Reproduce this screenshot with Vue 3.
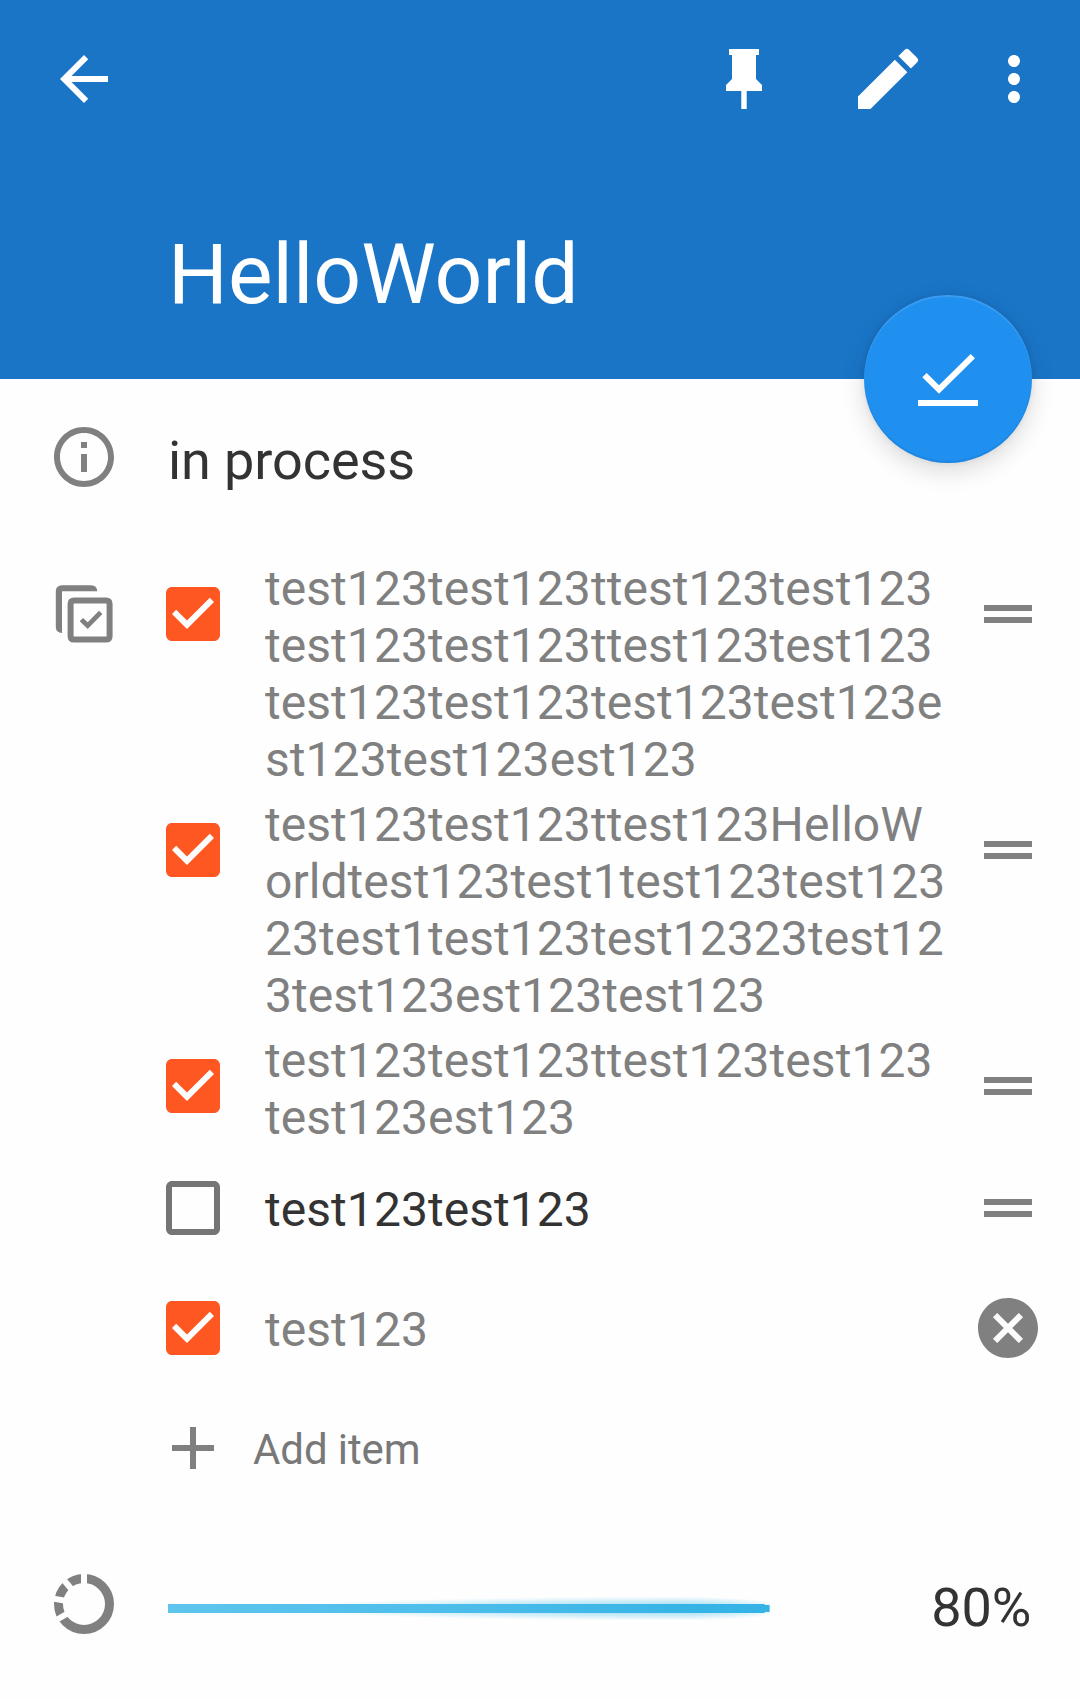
<script setup>
const CHECKED = 'M19 3H5c-1.11 0-2 .9-2 2v14c0 1.1.89 2 2 2h14c1.11 0 2-.9 2-2V5c0-1.1-.89-2-2-2zm-9 14l-5-5 1.41-1.41L10 14.17l7.59-7.59L19 8l-9 9z'
const UNCHECKED = 'M19 5v14H5V5h14m0-2H5c-1.1 0-2 .9-2 2v14c0 1.1.9 2 2 2h14c1.1 0 2-.9 2-2V5c0-1.1-.9-2-2-2z'
const HANDLE = 'M20 9H4v2h16V9zM4 15h16v-2H4v2z'
const CLEAR = 'M12 2C6.47 2 2 6.47 2 12s4.47 10 10 10 10-4.47 10-10S17.53 2 12 2zm5 13.59L15.59 17 12 13.41 8.41 17 7 15.59 10.59 12 7 8.41 8.41 7 12 10.59 15.59 7 17 8.41 13.41 12 17 15.59z'

const items = [
  { done: true, text: 'test123test123ttest123test123\ntest123test123ttest123test123\ntest123test123test123test123e\nst123test123est123' },
  { done: true, text: 'test123test123ttest123HelloW\norldtest123test1test123test123\n23test1test123test12323test12\n3test123est123test123' },
  { done: true, text: 'test123test123ttest123test123\ntest123est123' },
  { done: false, text: 'test123test123' },
  { done: true, text: 'test123', editing: true },
]
const percent = 80
</script>

<template>
  <div class="screen">
    <header class="header">
      <div class="toolbar">
        <svg class="icon" viewBox="0 0 24 24"><path d="M20 11H7.83l5.59-5.59L12 4l-8 8 8 8 1.41-1.41L7.83 13H20v-2z" /></svg>
        <div class="actions">
          <svg class="icon" viewBox="0 0 24 24"><path d="M16 12V4h1V2H7v2h1v8l-2 2v2h5.1v6h1.8v-6H18v-2l-2-2z" /></svg>
          <svg class="pencil" viewBox="0 0 24 24"><path d="M3 17.25V21h3.75L17.81 9.94l-3.75-3.75L3 17.25zM20.71 7.04a.996.996 0 0 0 0-1.41l-2.34-2.34a.996.996 0 0 0-1.41 0l-1.83 1.83 3.75 3.75 1.83-1.83z" /></svg>
          <svg class="icon" viewBox="0 0 24 24"><path d="M12 8c1.1 0 2-.9 2-2s-.9-2-2-2-2 .9-2 2 .9 2 2 2zm0 2c-1.1 0-2 .9-2 2s.9 2 2 2 2-.9 2-2-.9-2-2-2zm0 6c-1.1 0-2 .9-2 2s.9 2 2 2 2-.9 2-2-.9-2-2-2z" /></svg>
        </div>
      </div>
      <h1 class="title">HelloWorld</h1>
      <button class="fab">
        <svg viewBox="0 0 168 168"><path d="M58.3 82.3l4.4-4.3L75 90.3 106.7 59l4.3 4.3L75 98.7zM54 105h60v6H54z" /></svg>
      </button>
    </header>

    <section class="status">
      <svg class="icon" viewBox="0 0 24 24"><path d="M11 17h2v-6h-2v6zm1-15C6.48 2 2 6.48 2 12s4.48 10 10 10 10-4.48 10-10S17.52 2 12 2zm0 18c-4.41 0-8-3.59-8-8s3.59-8 8-8 8 3.59 8 8-3.59 8-8 8zM11 9h2V7h-2v2z" /></svg>
      <span>in process</span>
    </section>

    <section class="checklist">
      <svg class="icon list-icon" viewBox="0 0 72 72">
        <path d="M49.3 13.2H14V55q-6-.3-6.2-6V13.4q0-6 6.2-6.2H43q6 .2 6.3 6z" />
        <path class="line" d="M26 22.6H58q3.6 0 3.6 3.6V58q0 3.6-3.6 3.6H26q-3.4 0-3.4-3.6V26.2q0-3.6 3.4-3.6z" />
        <path d="M31.7 43.3L35 40l4.7 4.3L51 32.7l3.4 3.3L39.7 51z" />
      </svg>
      <div class="rows">
        <div v-for="(item, i) in items" :key="i" class="row">
          <svg class="icon box" :class="{ on: item.done }" viewBox="0 0 24 24"><path :d="item.done ? CHECKED : UNCHECKED" /></svg>
          <div class="text" :class="{ done: item.done }">{{ item.text }}</div>
          <svg class="icon end" viewBox="0 0 24 24"><path :d="item.editing ? CLEAR : HANDLE" /></svg>
        </div>
        <div class="row">
          <svg class="icon box add" viewBox="0 0 24 24"><path d="M19 13h-6v6h-2v-6H5v-2h6V5h2v6h6v2z" /></svg>
          <div class="add-label">Add item</div>
        </div>
      </div>
    </section>

    <section class="progress">
      <svg class="icon" viewBox="0 0 72 72">
        <circle class="ring" cx="36" cy="36" r="25.5" />
        <path class="gap" d="M36 36V2" />
        <path class="gap" d="M36 36V2" transform="rotate(-40 36 36)" />
        <path class="gap" d="M36 36V2" transform="rotate(-80 36 36)" />
        <path class="gap" d="M36 36V2" transform="rotate(-120 36 36)" />
      </svg>
      <div class="track">
        <div class="bar" :style="{ width: percent + '%' }"><div class="fill"></div></div>
      </div>
      <span class="percent">{{ percent }}%</span>
    </section>
  </div>
</template>

<style>
body { margin: 0; background: #fefefe; }
</style>

<style scoped>
.screen {
  box-sizing: border-box;
  width: 1080px;
  height: 1699px;
  overflow: hidden;
  background: #fefefe;
  color: #333;
  font-family: Roboto, "Noto Sans", sans-serif;
}
svg { display: block; flex: none; fill: #808080; }
.icon { width: 72px; height: 72px; }
.header {
  position: relative;
  box-sizing: border-box;
  height: 379px;
  padding: 39px 30px 0 48px;
  background: #1a75c7;
}
.header svg { fill: #fff; }
.toolbar { display: flex; justify-content: space-between; align-items: center; height: 80px; }
.actions { display: flex; align-items: center; }
.pencil { width: 80px; height: 80px; margin: 0 50px 0 68px; }
.title {
  margin: 107px 0 0 120px;
  font-size: 84px;
  line-height: 98px;
  font-weight: 400;
  color: #fff;
}
.fab {
  position: absolute;
  right: 48px;
  bottom: -84px;
  width: 168px;
  height: 168px;
  padding: 0;
  border: 0;
  border-radius: 50%;
  background: #1f8ff0;
  box-shadow: 0 8px 24px rgba(0, 0, 0, .14), 0 0 6px rgba(0, 0, 0, .07), inset 0 2px 1px rgba(255, 255, 255, .13), inset 0 -2px 1px rgba(0, 0, 0, .07);
}
.status {
  display: flex;
  align-items: center;
  height: 72px;
  margin-top: 42px;
  padding-left: 48px;
  gap: 48px;
  font-size: 54px;
  line-height: 64px;
  letter-spacing: -.08px;
}
.status span { padding-top: 8px; }
.checklist { display: flex; margin-top: 61px; padding-left: 48px; }
.list-icon { margin-top: 24px; }
.line { fill: none; stroke: #808080; stroke-width: 6; }
.rows { flex: 1; padding-left: 37px; }
.row { display: flex; min-height: 120px; align-items: flex-start; }
.box { margin-top: 24px; fill: #757575; }
.box.on { fill: #ff5722; }
.box.add { fill: #808080; }
.text {
  flex: 1;
  align-self: center;
  margin-left: 36px;
  padding: 5px 0 3px;
  font-size: 48px;
  line-height: 57px;
  letter-spacing: .055px;
  white-space: pre;
}
.row:nth-child(-n+3) .text { padding: 6px 0 2px; }
.done { color: #808080; }
.end { margin: 24px 36px 0 0; }
.add-label {
  align-self: center;
  margin-left: 24px;
  padding-top: 3px;
  font-size: 42px;
  line-height: 49px;
  letter-spacing: -.1px;
  color: #787878;
}
.progress {
  display: flex;
  align-items: center;
  height: 72px;
  margin-top: 60px;
  padding: 0 48px;
}
.ring { fill: none; stroke: #808080; stroke-width: 9; }
.gap { stroke: #fefefe; stroke-width: 6; }
.track { width: 752px; margin: 9px 0 0 48px; }
.bar { position: relative; height: 9px; }
.bar::before,
.bar::after {
  content: "";
  position: absolute;
  top: -8px;
  height: 25px;
}
/* soft glow that swells towards the leading end of the bar */
.bar::before {
  right: 92px;
  width: 400px;
  background: radial-gradient(400px 12px at 100% 50%, rgba(51, 181, 229, .55), rgba(51, 181, 229, .25) 60%, rgba(51, 181, 229, 0));
}
.bar::after {
  right: 0;
  width: 92px;
  background: radial-gradient(115px 12px at 0 50%, rgba(51, 181, 229, .55), rgba(51, 181, 229, .25) 60%, rgba(51, 181, 229, 0));
}
.fill {
  position: relative;
  z-index: 1;
  height: 9px;
  background: linear-gradient(90deg, #5ec5ed, #4cbdea 50%, #36b4e6 85%, #36b3e6);
  clip-path: polygon(0 0, calc(100% - 5px) 0, calc(100% - 5px) 1px, 100% 1px, 100% 8px, calc(100% - 5px) 8px, calc(100% - 5px) 100%, 0 100%);
}
.percent { margin: 0 1px 0 auto; padding-top: 8px; font-size: 54px; line-height: 64px; letter-spacing: -.2px; }
</style>
